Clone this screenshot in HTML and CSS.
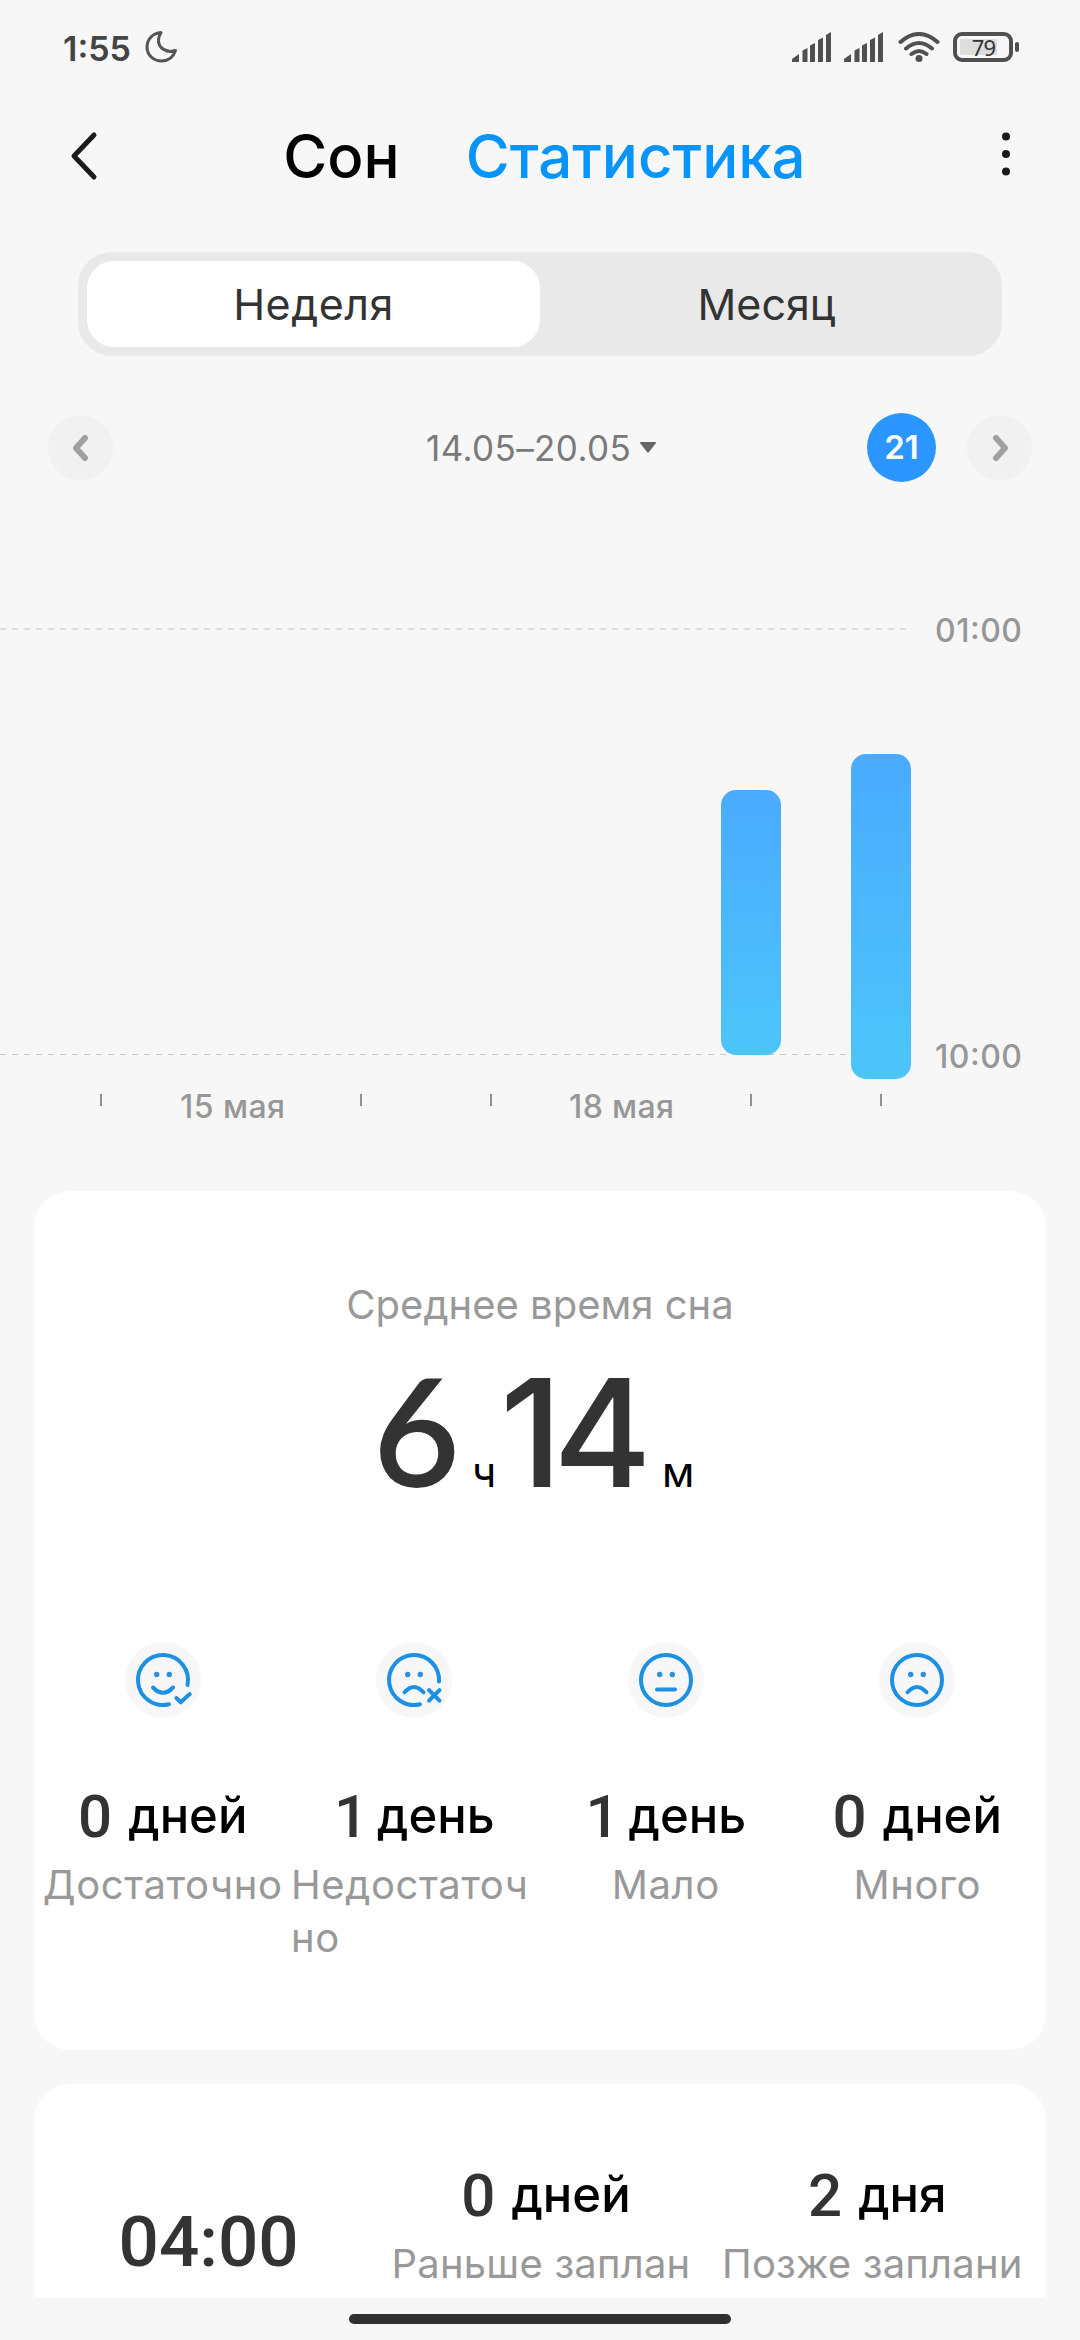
FILE: index.html
```
<!DOCTYPE html>
<html lang="ru">
<head>
    <meta charset="UTF-8">
    <meta name="viewport" content="width=device-width, initial-scale=1.0">
    <title>Сон - Статистика</title>
    <link rel="stylesheet" href="styles.css">
</head>
<body>
    <div class="status-bar">
        <span class="clock">1:55</span>
        <svg class="moon" width="34" height="34" viewBox="0 0 34 34">
            <path d="M16 2.5C8 3 2 9 2 17c0 8 6.500 14 14.500 14C23 31 28.500 27 30.500 20.500C22 23.500 13 18 13.500 10C13.600 7 14.500 5 16 2.500Z"/>
        </svg>
        <div class="status-icons">
            <svg class="signal" width="40" height="30" viewBox="0 0 40 30">
                <path d="M0 30v-3l7-5v8zM10.500 30V18.500l5-2.500v14zM18 30V13.500l5-2.500v19zM26 30V8l5-2.500V30zM34 30V3l5-3v30z"/>
            </svg>
            <svg class="signal" width="40" height="30" viewBox="0 0 40 30">
                <path d="M0 30v-3l7-5v8zM10.500 30V18.500l5-2.500v14zM18 30V13.500l5-2.500v19zM26 30V8l5-2.500V30zM34 30V3l5-3v30z"/>
            </svg>
            <svg class="wifi" width="42" height="30" viewBox="0 0 42 30">
                <path d="M2.500 10q18.500-16 37 0M8 16.500q13-11 26 0M13.500 22q7.500-6 15 0"/>
                <circle cx="21" cy="26.500" r="3.500"/>
            </svg>
            <div class="battery"><span class="battery-level">79</span></div>
        </div>
    </div>

    <div class="header">
        <svg class="back" width="32" height="50" viewBox="0 0 32 50">
            <path d="M26 4L6 25l20 21"/>
        </svg>
        <div class="titles">
            <span class="title">Сон</span>
            <span class="title title-active">Статистика</span>
        </div>
        <svg class="more" width="10" height="44" viewBox="0 0 10 44">
            <circle cx="5" cy="4.500" r="4"/>
            <circle cx="5" cy="22" r="4"/>
            <circle cx="5" cy="39.500" r="4"/>
        </svg>
    </div>

    <div class="tabs">
        <div class="tab tab-active">Неделя</div>
        <div class="tab">Месяц</div>
    </div>

    <div class="date-nav">
        <div class="arrow">
            <svg width="20" height="30" viewBox="0 0 20 30"><path d="M14 5L5 15l9 10"/></svg>
        </div>
        <div class="range">
            <span>14.05–20.05</span>
            <svg width="16" height="11" viewBox="0 0 16 11"><path d="M0 1q0-1 1-1h14q1 0 1 1L9 10q-1 1-2 0z"/></svg>
        </div>
        <div class="today">21</div>
        <div class="arrow">
            <svg width="20" height="30" viewBox="0 0 20 30"><path d="M6 5l9 10-9 10"/></svg>
        </div>
    </div>

    <svg class="chart" width="1080" height="709" viewBox="0 482 1080 709">
        <defs>
            <linearGradient id="barFill" x1="0" y1="0" x2="0" y2="1">
                <stop offset="0" stop-color="#4aabff"/>
                <stop offset="1" stop-color="#4cc5f9"/>
            </linearGradient>
        </defs>
        <path class="grid-top" d="M0 629H908"/>
        <path class="grid-bottom" d="M0 1054.500H908"/>
        <rect x="721" y="790" width="60" height="265" rx="15" fill="url(#barFill)"/>
        <rect x="851" y="754" width="60" height="325" rx="15" fill="url(#barFill)"/>
        <path class="ticks" d="M101 1094v12M361 1094v12M491 1094v12M751 1094v12M881 1094v12"/>
        <text x="935" y="641.500" textLength="87">01:00</text>
        <text x="935" y="1067.500" textLength="87">10:00</text>
        <text x="180" y="1118" textLength="105">15 мая</text>
        <text x="569" y="1118" textLength="105">18 мая</text>
    </svg>

    <div class="card summary">
        <div class="summary-label">Среднее время сна</div>
        <div class="summary-value">
            <span class="big hours">6</span><span class="unit">ч</span><span class="big minutes">14</span><span class="unit">м</span>
        </div>
        <div class="moods">
            <div class="mood">
                <svg class="face" width="76" height="76" viewBox="-38 -38 76 76">
                    <circle class="face-bg" r="38"/>
                    <path d="M24.500 5A25 25 0 1 0 6 24.300M-10 7.500Q0 18 10 7.500M13.400 18l4.300 4.300 9-8.300"/>
                    <circle class="eye" cx="-6.300" cy="-5.500" r="2.700"/>
                    <circle class="eye" cx="6.300" cy="-5.500" r="2.700"/>
                </svg>
                <div class="days"><span class="num">0</span><span class="word">дней</span></div>
                <div class="mood-label">Достаточно</div>
            </div>
            <div class="mood">
                <svg class="face" width="76" height="76" viewBox="-38 -38 76 76">
                    <circle class="face-bg" r="38"/>
                    <path d="M25 1.500A25 25 0 1 0 6 24.300M-9.500 12.300Q0 1.500 9.500 12.300M15 10.200l10.500 10.500M25.500 10.200L15 20.700"/>
                    <circle class="eye" cx="-6.300" cy="-5.500" r="2.700"/>
                    <circle class="eye" cx="6.300" cy="-5.500" r="2.700"/>
                </svg>
                <div class="days"><span class="num num-one">1</span><span class="word">день</span></div>
                <div class="mood-label mood-label-wrap">Недостаточ<br>но</div>
            </div>
            <div class="mood">
                <svg class="face" width="76" height="76" viewBox="-38 -38 76 76">
                    <circle class="face-bg" r="38"/>
                    <circle class="ring" r="25"/>
                    <path d="M-9 9.500H9"/>
                    <circle class="eye" cx="-6.300" cy="-5.500" r="2.700"/>
                    <circle class="eye" cx="6.300" cy="-5.500" r="2.700"/>
                </svg>
                <div class="days"><span class="num num-one">1</span><span class="word">день</span></div>
                <div class="mood-label">Мало</div>
            </div>
            <div class="mood">
                <svg class="face" width="76" height="76" viewBox="-38 -38 76 76">
                    <circle class="face-bg" r="38"/>
                    <circle class="ring" r="25"/>
                    <path d="M-9.500 12.300Q0 1.500 9.500 12.300"/>
                    <circle class="eye" cx="-6.300" cy="-5.500" r="2.700"/>
                    <circle class="eye" cx="6.300" cy="-5.500" r="2.700"/>
                </svg>
                <div class="days"><span class="num">0</span><span class="word">дней</span></div>
                <div class="mood-label">Много</div>
            </div>
        </div>
    </div>

    <div class="card schedule">
        <div class="schedule-time">04:00</div>
        <div class="schedule-item">
            <div class="days"><span class="num">0</span><span class="word">дней</span></div>
            <div class="mood-label">Раньше заплан</div>
        </div>
        <div class="schedule-item">
            <div class="days"><span class="num">2</span><span class="word">дня</span></div>
            <div class="mood-label">Позже заплани</div>
        </div>
    </div>

    <div class="home-area">
        <div class="home-bar"></div>
    </div>
</body>
</html>
```
FILE: styles.css
```
* {
    margin: 0;
    padding: 0;
    box-sizing: border-box;
}

body {
    width: 1080px;
    height: 2340px;
    overflow: hidden;
    display: flex;
    flex-direction: column;
    font-family: Inter, "Noto Sans", sans-serif;
    background-color: #f7f7f7;
    color: #333;
}

svg {
    display: block;
    flex-shrink: 0;
}

/* status bar */
.status-bar {
    height: 96px;
    padding: 0 67px 2px 63px;
    display: flex;
    align-items: center;
}

.clock {
    font-size: 34px;
    font-weight: 600;
    color: #444;
    margin-top: 2px;
}

.moon {
    margin-left: 14px;
}

.moon path {
    fill: none;
    stroke: #555;
    stroke-width: 3;
    stroke-linejoin: round;
}

.status-icons {
    margin-left: auto;
    display: flex;
    align-items: center;
}

.signal {
    margin-right: 12px;
    fill: #505050;
}

.wifi {
    margin-left: 2px;
    fill: #505050;
}

.wifi path {
    fill: none;
    stroke: #505050;
    stroke-width: 4;
    stroke-linecap: round;
}

.battery {
    width: 60px;
    height: 30px;
    margin-left: 13px;
    padding: 3px;
    border: 4px solid #505050;
    border-radius: 9px;
    position: relative;
}

.battery::after {
    content: "";
    position: absolute;
    right: -10px;
    top: 6px;
    width: 4px;
    height: 10px;
    border-radius: 2px;
    background-color: #505050;
}

.battery-level {
    display: block;
    width: 37px;
    height: 16px;
    background-color: #ddd;
    font-family: "Noto Sans", sans-serif;
    font-size: 22px;
    line-height: 16px;
    text-align: right;
    padding-right: 2px;
    letter-spacing: -1px;
}

/* header */
.header {
    height: 120px;
    padding: 0 69px 0 68px;
    display: flex;
    align-items: center;
    justify-content: space-between;
}

.back path {
    fill: none;
    stroke: #1a1a1a;
    stroke-width: 5;
    stroke-linecap: round;
    stroke-linejoin: round;
}

.titles {
    display: flex;
    gap: 66px;
    margin-right: 12px;
}

.title {
    font-size: 60px;
    line-height: 72px;
    font-weight: 500;
    color: #000;
}

.title-active {
    color: #0795fb;
}

.more {
    fill: #1a1a1a;
    margin-bottom: 5px;
}

/* week / month switch */
.tabs {
    height: 104px;
    margin: 36px 78px 0;
    padding: 9px;
    display: flex;
    background-color: #e9e9e9;
    border-radius: 34px;
}

.tab {
    flex: 1;
    line-height: 86px;
    text-align: center;
    font-size: 43px;
    border-radius: 27px;
}

.tab-active {
    background-color: #fff;
    letter-spacing: 0.5px;
}

/* date navigation */
.date-nav {
    height: 69px;
    margin-top: 57px;
    padding: 0 48px;
    display: flex;
    align-items: center;
}

.arrow {
    width: 65px;
    height: 65px;
    border-radius: 50%;
    background-color: #f1f1f1;
    display: flex;
    align-items: center;
    justify-content: center;
}

.arrow path {
    fill: none;
    stroke: #a0a0a0;
    stroke-width: 6;
    stroke-linecap: round;
    stroke-linejoin: round;
}

.range {
    margin-left: 313px;
    width: 230px;
    display: flex;
    align-items: center;
    justify-content: space-between;
    font-size: 35px;
    letter-spacing: 0.4px;
    color: #7a7a7a;
    white-space: nowrap;
}

.range path {
    fill: #666;
}

.today {
    width: 69px;
    height: 69px;
    margin-left: auto;
    margin-right: 31px;
    border-radius: 50%;
    background-color: #2b96ff;
    color: #fff;
    font-size: 33px;
    font-weight: 600;
    line-height: 69px;
    text-align: center;
}

/* chart */
.chart text {
    font-size: 32px;
    font-weight: 500;
    fill: #979797;
}

.grid-top {
    stroke: #dedede;
    stroke-width: 2;
    stroke-dasharray: 6 6;
}

.grid-bottom {
    stroke: #c6c6c6;
    stroke-width: 1;
    stroke-dasharray: 6 6;
}

.ticks {
    stroke: #909090;
    stroke-width: 2;
}

/* cards */
.card {
    width: 1012px;
    margin-left: 34px;
    flex-shrink: 0;
    background-color: #fff;
    border-radius: 36px;
}

.summary {
    height: 859px;
    padding: 87px 3px 0;
}

.summary-label {
    font-size: 40px;
    line-height: 54px;
    text-align: center;
    color: #999;
}

.summary-value {
    height: 150px;
    margin-top: 22px;
    padding-left: 336px;
    display: flex;
    align-items: baseline;
    line-height: 150px;
}

.big {
    font-size: 150px;
    font-weight: 500;
}

.hours {
    width: 99px;
    font-family: Lato, Inter, sans-serif;
    font-weight: 600;
}

.minutes {
    width: 162px;
    letter-spacing: -9px;
}

.unit {
    width: 28px;
    font-size: 42px;
    font-weight: 400;
    color: #000;
}

.moods {
    margin-top: 138px;
    display: flex;
}

.mood {
    width: 251.500px;
    display: flex;
    flex-direction: column;
    align-items: center;
}

.face path,
.ring {
    fill: none;
    stroke: #1c90e3;
    stroke-width: 4;
    stroke-linecap: round;
    stroke-linejoin: round;
}

.face-bg {
    fill: #f7f7f7;
}

.eye {
    fill: #2b8fd8;
}

.mood .days {
    margin-top: 68px;
}

.days {
    display: flex;
    align-items: flex-end;
    justify-content: center;
    line-height: 60px;
}

.num {
    font-family: Roboto, sans-serif;
    font-size: 60px;
    font-weight: 500;
}

.num-one {
    margin-right: -7px;
}

.word {
    margin-left: 16px;
    margin-bottom: 1px;
    font-size: 49px;
    font-weight: 500;
    color: #000;
}

.mood-label {
    margin-top: 11px;
    font-size: 40px;
    line-height: 53px;
    letter-spacing: 0.6px;
    color: #999;
    white-space: nowrap;
}

.mood-label-wrap {
    margin-right: 9px;
}

.schedule {
    height: 214px;
    margin-top: 34px;
    padding: 81px 3px 0;
    display: flex;
    border-radius: 36px 36px 0 0;
}

.schedule-time {
    width: 344px;
    padding-top: 41px;
    font-family: Roboto, sans-serif;
    font-size: 71px;
    font-weight: 500;
    line-height: 72px;
    text-align: center;
}

.schedule-item {
    width: 332px;
    display: flex;
    flex-direction: column;
    align-items: center;
}

.schedule .mood-label {
    margin-right: 10px;
    letter-spacing: 0.2px;
}

/* gesture bar */
.home-area {
    height: 42px;
    padding-top: 16px;
}

.home-bar {
    width: 382px;
    height: 10px;
    margin: 0 auto;
    border-radius: 5px;
    background-color: #303030;
}
```
